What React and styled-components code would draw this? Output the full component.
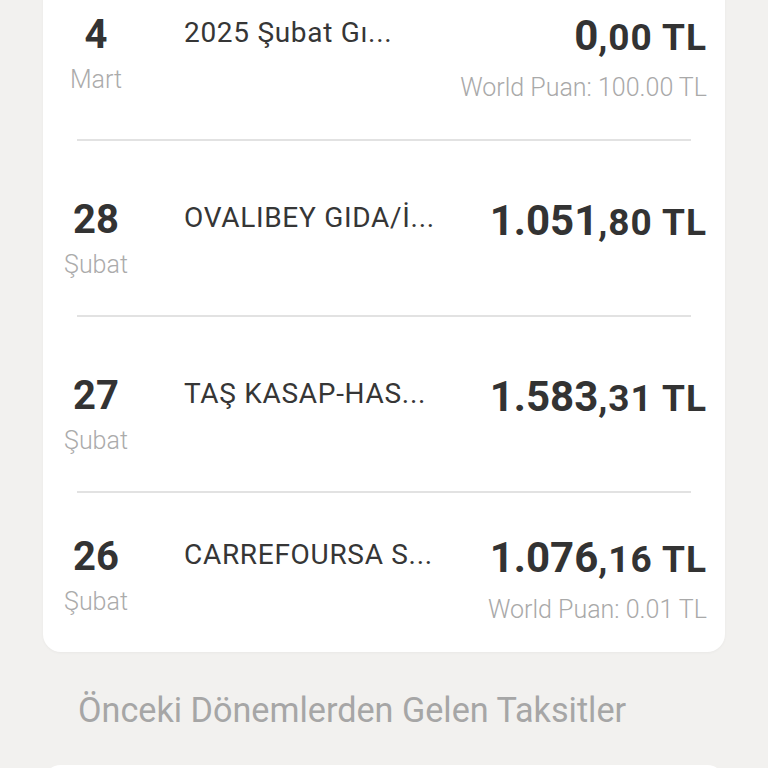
import React from 'react'
import styled, { createGlobalStyle } from 'styled-components'

const GlobalStyle = createGlobalStyle`
  html, body {
    margin: 0;
    padding: 0;
    background: #f2f1ef;
    font-family: Roboto, "Noto Sans", "Liberation Sans", sans-serif;
    -webkit-font-smoothing: antialiased;
  }
`

const Page = styled.div`
  height: 768px;
  overflow: hidden;
  padding: 0 43px;
`

const Card = styled.div`
  margin-top: -29px;
  background: #ffffff;
  border-radius: 18px;
  box-shadow: 0 1px 3px rgba(0, 0, 0, 0.04);
`

const Row = styled.div`
  display: flex;
  align-items: flex-start;
  padding: ${p => (p.$hasPoints ? 40 : 55)}px 18px ${p => (p.$last ? 27 : 36)}px 13px;
`

const Divider = styled.div`
  height: 2px;
  margin: 0 34px;
  background: #e2e2e2;
`

const DateCol = styled.div`
  width: 80px;
  flex: none;
  display: flex;
  flex-direction: column;
  align-items: center;
`

const Day = styled.span`
  font-size: 40px;
  line-height: 48px;
  font-weight: 700;
  color: #333333;
`

const Month = styled.span`
  margin-top: 6px;
  font-size: 25px;
  line-height: 29px;
  font-weight: 300;
  color: #ababab;
`

const Name = styled.div`
  flex: 1;
  min-width: 0;
  margin: 5px 0 0 48px;
  font-size: 28px;
  line-height: 33px;
  letter-spacing: 0.7px;
  color: #363636;
  white-space: nowrap;
`

const AmountCol = styled.div`
  flex: none;
  display: flex;
  flex-direction: column;
  align-items: flex-end;
`

const Amount = styled.div`
  font-size: 42px;
  line-height: 50px;
  font-weight: 700;
  color: #333333;
  white-space: nowrap;
`

const Cents = styled.span`
  font-size: 37px;
  letter-spacing: 1px;
`

const Points = styled.div`
  margin-top: 10px;
  font-size: 25px;
  line-height: 30px;
  font-weight: 300;
  color: #a9a9a9;
  white-space: nowrap;
`

const SectionTitle = styled.h2`
  margin: 0;
  padding: 38px 0 0 35px;
  font-size: 34.2px;
  line-height: 40px;
  font-weight: 400;
  color: #a6a6a6;
`

const NextCard = styled.div`
  margin-top: 35px;
  height: 60px;
  background: #ffffff;
  border-radius: 18px 18px 0 0;
`

const transactions = [
  { day: '4', month: 'Mart', name: '2025 Şubat Gı...', whole: '0', cents: ',00 TL', points: '100.00 TL' },
  { day: '28', month: 'Şubat', name: 'OVALIBEY GIDA/İ...', whole: '1.051', cents: ',80 TL' },
  { day: '27', month: 'Şubat', name: 'TAŞ KASAP-HAS...', whole: '1.583', cents: ',31 TL' },
  { day: '26', month: 'Şubat', name: 'CARREFOURSA S...', whole: '1.076', cents: ',16 TL', points: '0.01 TL' }
]

export default function App () {
  return (
    <>
      <GlobalStyle />
      <Page>
        <Card>
          {transactions.map((t, i) => (
            <React.Fragment key={i}>
              {i > 0 && <Divider />}
              <Row $hasPoints={!!t.points} $last={i === transactions.length - 1}>
                <DateCol>
                  <Day>{t.day}</Day>
                  <Month>{t.month}</Month>
                </DateCol>
                <Name>{t.name}</Name>
                <AmountCol>
                  <Amount>{t.whole}<Cents>{t.cents}</Cents></Amount>
                  {t.points && <Points>World Puan: {t.points}</Points>}
                </AmountCol>
              </Row>
            </React.Fragment>
          ))}
        </Card>
        <SectionTitle>Önceki Dönemlerden Gelen Taksitler</SectionTitle>
        <NextCard />
      </Page>
    </>
  )
}
